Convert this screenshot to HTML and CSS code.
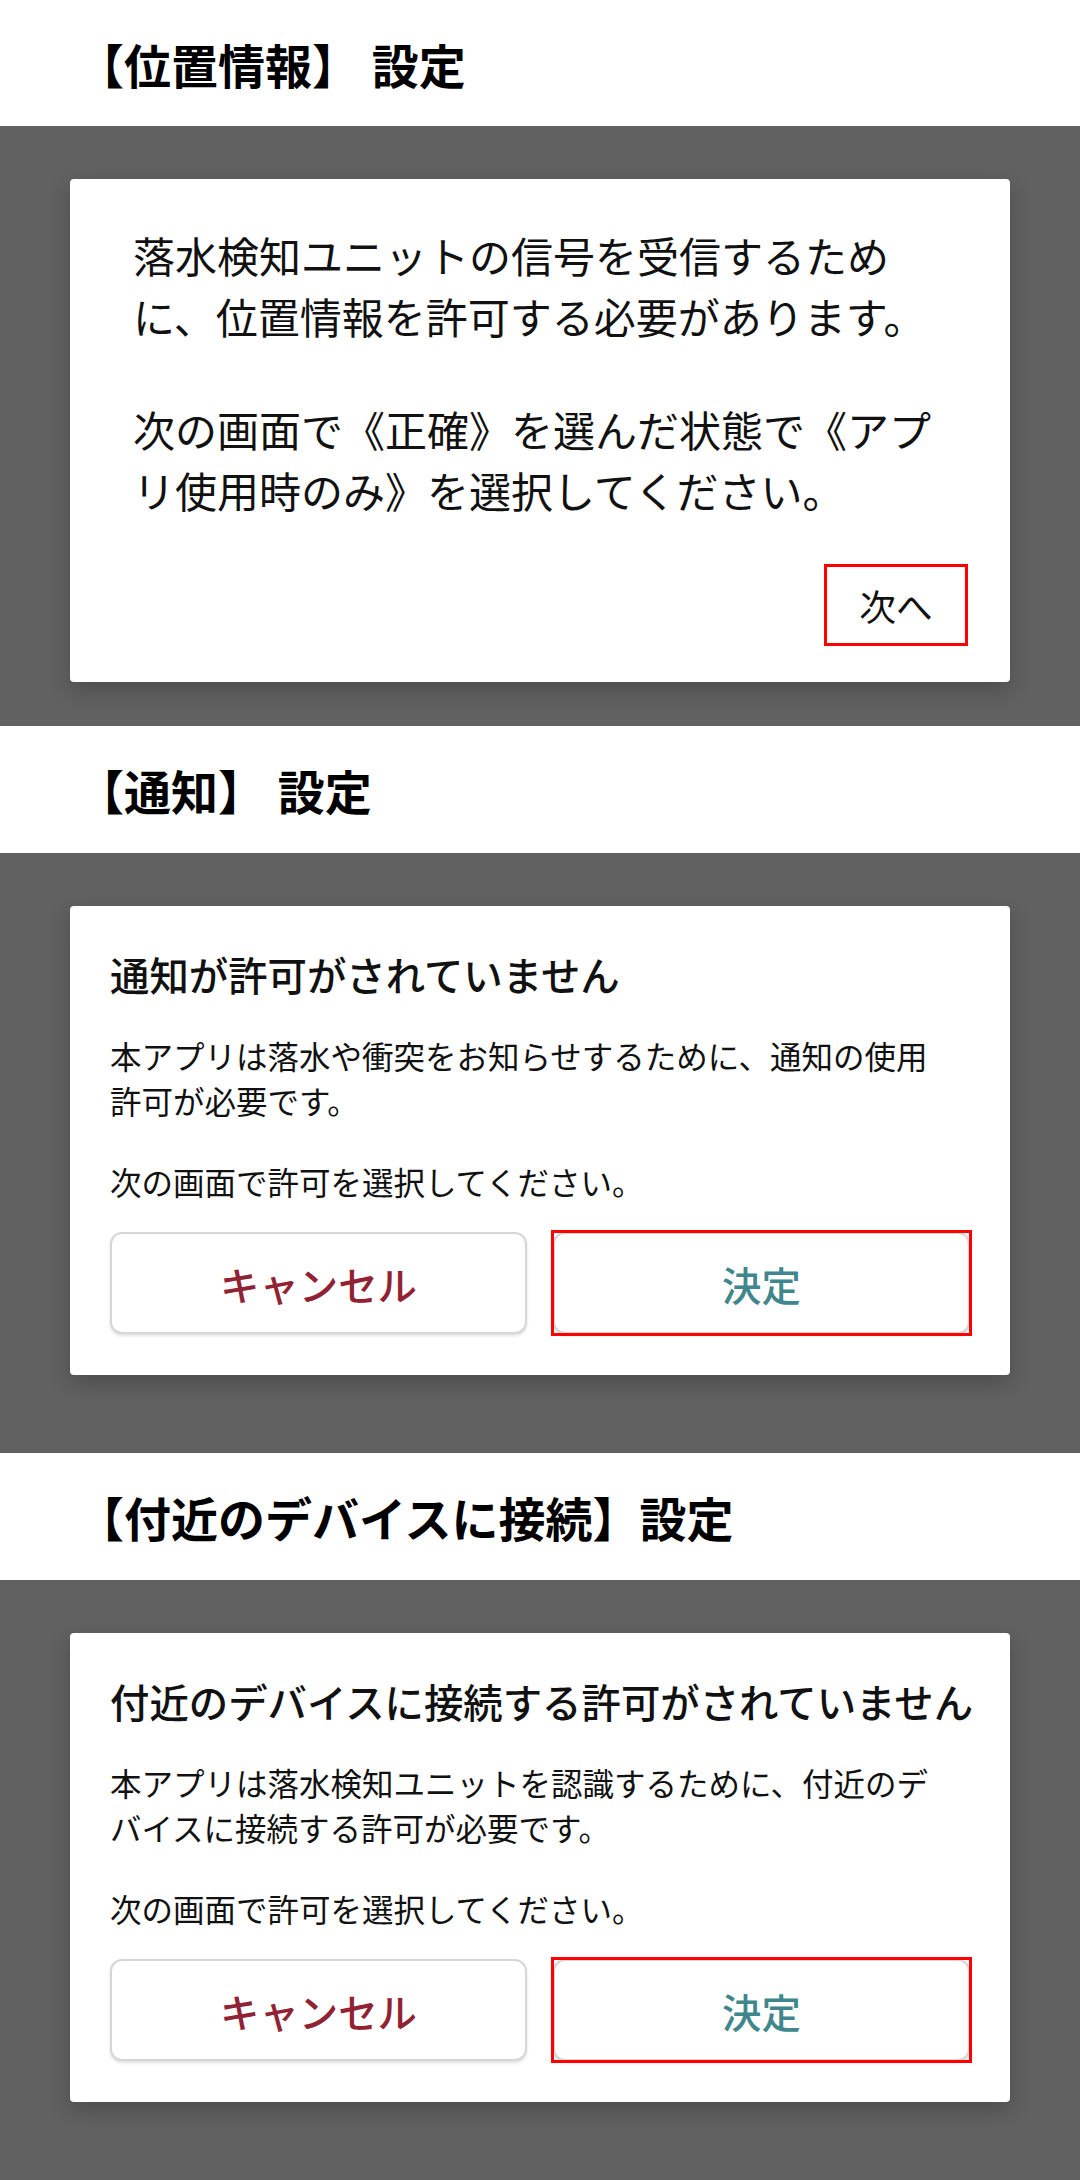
FILE: index.html
```html
<!DOCTYPE html>
<html lang="ja">
<head>
    <meta charset="UTF-8">
    <meta name="viewport" content="width=device-width, initial-scale=1.0">
    <title>権限の設定</title>
    <link rel="stylesheet" href="styles.css">
</head>
<body>

    <section class="perm">
        <h2 class="perm-title">【位置情報】 設定</h2>
        <div class="stage">
            <div class="dialog plain">
                <p>落水検知ユニットの信号を受信するために、位置情報を許可する必要があります。</p>
                <p>次の画面で《正確》を選んだ状態で《アプリ使用時のみ》を選択してください。</p>
                <div class="foot">
                    <button class="next">次へ</button>
                </div>
            </div>
        </div>
    </section>

    <section class="perm">
        <h2 class="perm-title">【通知】 設定</h2>
        <div class="stage">
            <div class="dialog alert">
                <h3>通知が許可がされていません</h3>
                <p>本アプリは落水や衝突をお知らせするために、通知の使用許可が必要です。</p>
                <p>次の画面で許可を選択してください。</p>
                <div class="actions">
                    <button class="cancel">キャンセル</button>
                    <button class="ok marked">決定</button>
                </div>
            </div>
        </div>
    </section>

    <section class="perm">
        <h2 class="perm-title">【付近のデバイスに接続】設定</h2>
        <div class="stage">
            <div class="dialog alert">
                <h3>付近のデバイスに接続する許可がされていません</h3>
                <p>本アプリは落水検知ユニットを認識するために、付近のデバイスに接続する許可が必要です。</p>
                <p>次の画面で許可を選択してください。</p>
                <div class="actions">
                    <button class="cancel">キャンセル</button>
                    <button class="ok marked">決定</button>
                </div>
            </div>
        </div>
    </section>

</body>
</html>
```

FILE: styles.css
```css
* {
    box-sizing: border-box;
}

html, body {
    margin: 0;
    background-color: #fff;
    font-family: "Noto Sans CJK JP", "Noto Sans", sans-serif;
    color: #111;
}

/* white band with the section name */
.perm-title {
    display: flex;
    align-items: center;
    height: 127px;
    margin: 0;
    padding-left: 77px;
    font-size: 47px;
    font-weight: 700;
    line-height: 1;
    word-spacing: 2px;
    color: #000;
}
.perm:first-child .perm-title {
    height: 126px;
}

/* grey phone screen behind the dialog */
.stage {
    height: 600px;
    padding-top: 53px;
    background-color: #616161;
}

.dialog {
    margin: 0 70px;
    background-color: #fff;
    border-radius: 4px;
    box-shadow: 0 8px 22px rgba(0, 0, 0, .22);
}

.dialog p {
    margin: 0;
}

/* location dialog */
.plain {
    padding: 45px 42px 36px 63px;
}
.plain p {
    padding-right: 18px;
    font-size: 42px;
    line-height: 61px;
}
.plain p + p {
    margin-top: 52px;
}
.foot {
    display: flex;
    justify-content: flex-end;
    margin-top: 44px;
}
.next {
    width: 144px;
    height: 82px;
    padding: 0;
    border: 3px solid #f00;
    background: none;
    font-family: inherit;
    font-size: 36.75px;
    color: #111;
}

/* alert dialogs */
.alert {
    padding: 42px 28px 41px 40px;
}
.alert h3 {
    margin: 0;
    font-size: 39.4px;
    font-weight: 500;
    line-height: 51px;
    white-space: nowrap;
}
.alert p {
    padding-right: 26px;
    font-size: 31.5px;
    line-height: 44.5px;
}
.alert h3 + p {
    margin-top: 34px;
}
.alert p + p {
    margin-top: 37px;
}

.actions {
    display: grid;
    grid-template-columns: 1fr 1fr;
    gap: 26px;
    margin-top: 28.5px;
    padding-right: 12px;
}
.actions button {
    position: relative;
    height: 102px;
    padding: 0;
    border: 2px solid #d6d6d6;
    border-radius: 12px;
    background-color: #fff;
    box-shadow: 0 2px 3px rgba(0, 0, 0, .12);
    font-family: inherit;
    font-size: 39.4px;
    font-weight: 500;
}
.cancel {
    color: #912233;
}
.ok {
    color: #3f878c;
}

/* red frame drawn over the screenshot */
.marked::after {
    content: "";
    position: absolute;
    inset: -4px;
    border: 3px solid #f00;
}
```
